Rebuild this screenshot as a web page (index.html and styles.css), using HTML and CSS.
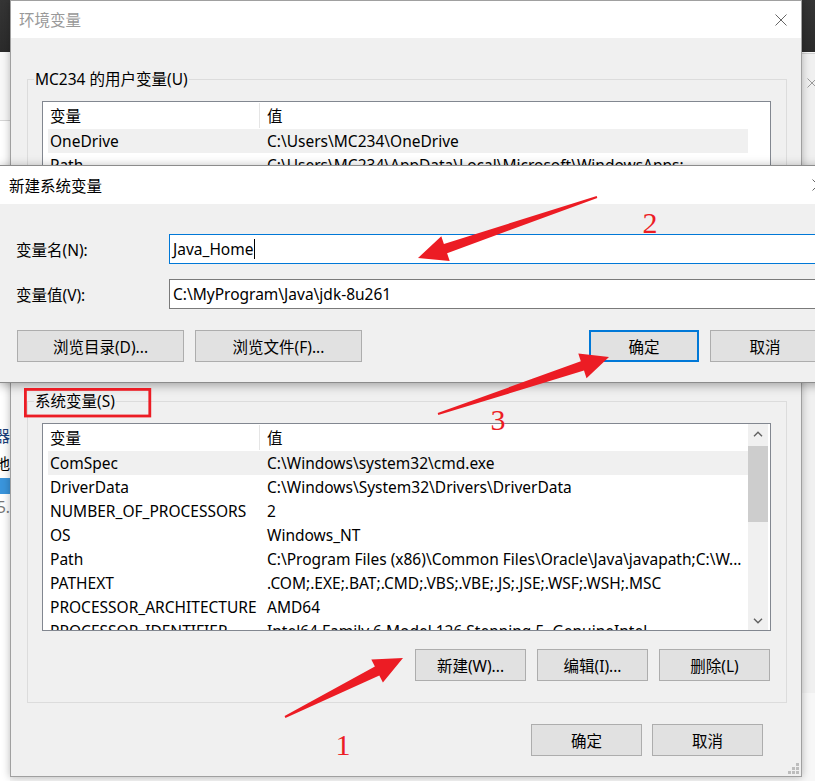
FILE: index.html
```html
<!DOCTYPE html>
<html lang="zh-CN">
<head>
<meta charset="utf-8">
<title>环境变量</title>
<link rel="stylesheet" href="styles.css">
</head>
<body>
<div class="desktop">

  <div class="bg-left">
    <div class="bl-head"></div>
    <div class="bl-line bl-a">服务器</div>
    <div class="bl-line bl-b">本地</div>
    <div class="bl-sel"></div>
    <div class="bl-line bl-c">5.</div>
  </div>

  <div class="bg-right">
    <svg class="bg-x" viewBox="0 0 10 10"><path d="M0.5 0.5L9.5 9.5M9.5 0.5L0.5 9.5"/></svg>
  </div>

  <div class="win main">
    <div class="titlebar inactive">
      <span>环境变量</span>
      <svg class="close" viewBox="0 0 12 12"><path d="M0.5 0.5L11.5 11.5M11.5 0.5L0.5 11.5"/></svg>
    </div>
    <div class="win-body">
      <fieldset class="group">
        <legend>MC234 的用户变量(U)</legend>
        <div class="listbox">
          <div class="lv">
            <div class="lv-head"><span class="c1">变量</span><span class="c2">值</span></div>
            <div class="lv-row sel"><span class="c1">OneDrive</span><span class="c2">C:\Users\MC234\OneDrive</span></div>
            <div class="lv-row"><span class="c1">Path</span><span class="c2">C:\Users\MC234\AppData\Local\Microsoft\WindowsApps;</span></div>
            <div class="lv-row"><span class="c1">TEMP</span><span class="c2">%USERPROFILE%\AppData\Local\Temp</span></div>
            <div class="lv-row"><span class="c1">TMP</span><span class="c2">%USERPROFILE%\AppData\Local\Temp</span></div>
          </div>
          <div class="vscroll empty"></div>
        </div>
        <div class="btnrow">
          <button class="btn">新建(N)...</button>
          <button class="btn">编辑(E)...</button>
          <button class="btn">删除(D)</button>
        </div>
      </fieldset>

      <fieldset class="group">
        <legend>系统变量(S)</legend>
        <div class="listbox">
          <div class="lv">
            <div class="lv-head"><span class="c1">变量</span><span class="c2">值</span></div>
            <div class="lv-row sel"><span class="c1">ComSpec</span><span class="c2">C:\Windows\system32\cmd.exe</span></div>
            <div class="lv-row"><span class="c1">DriverData</span><span class="c2">C:\Windows\System32\Drivers\DriverData</span></div>
            <div class="lv-row"><span class="c1">NUMBER_OF_PROCESSORS</span><span class="c2">2</span></div>
            <div class="lv-row"><span class="c1">OS</span><span class="c2">Windows_NT</span></div>
            <div class="lv-row"><span class="c1">Path</span><span class="c2">C:\Program Files (x86)\Common Files\Oracle\Java\javapath;C:\W...</span></div>
            <div class="lv-row"><span class="c1">PATHEXT</span><span class="c2">.COM;.EXE;.BAT;.CMD;.VBS;.VBE;.JS;.JSE;.WSF;.WSH;.MSC</span></div>
            <div class="lv-row"><span class="c1">PROCESSOR_ARCHITECTURE</span><span class="c2">AMD64</span></div>
            <div class="lv-row"><span class="c1">PROCESSOR_IDENTIFIER</span><span class="c2">Intel64 Family 6 Model 126 Stepping 5, GenuineIntel</span></div>
          </div>
          <div class="vscroll">
            <div class="sb-arrow"><svg class="chev" viewBox="0 0 10 6"><polyline points="1,5.2 5,1.2 9,5.2"/></svg></div>
            <div class="sb-thumb"></div>
            <div class="sb-space"></div>
            <div class="sb-arrow down"><svg class="chev" viewBox="0 0 10 6"><polyline points="1,0.8 5,4.8 9,0.8"/></svg></div>
          </div>
        </div>
        <div class="btnrow">
          <button class="btn">新建(W)...</button>
          <button class="btn">编辑(I)...</button>
          <button class="btn">删除(L)</button>
        </div>
      </fieldset>

      <div class="footer">
        <button class="btn">确定</button>
        <button class="btn">取消</button>
      </div>
    </div>
    <svg class="grip" viewBox="0 0 11 11">
      <rect x="8" y="0" width="3" height="3"/>
      <rect x="4" y="4" width="3" height="3"/>
      <rect x="8" y="4" width="3" height="3"/>
      <rect x="0" y="8" width="3" height="3"/>
      <rect x="4" y="8" width="3" height="3"/>
      <rect x="8" y="8" width="3" height="3"/>
    </svg>
  </div>

  <div class="win dialog">
    <div class="titlebar">
      <span>新建系统变量</span>
      <svg class="close" viewBox="0 0 12 12"><path d="M0.5 0.5L11.5 11.5M11.5 0.5L0.5 11.5"/></svg>
    </div>
    <div class="dlg-body">
      <div class="field">
        <label>变量名(N):</label>
        <div class="input focus">Java_Home<span class="caret"></span></div>
      </div>
      <div class="field">
        <label>变量值(V):</label>
        <div class="input">C:\MyProgram\Java\jdk-8u261</div>
      </div>
      <div class="dlg-buttons">
        <button class="btn wide">浏览目录(D)...</button>
        <button class="btn wide">浏览文件(F)...</button>
        <span class="spacer"></span>
        <button class="btn small default">确定</button>
        <button class="btn small">取消</button>
      </div>
    </div>
  </div>

  <svg class="annot" viewBox="0 0 815 781">
    <rect class="mark" x="25.4" y="389.4" width="124.4" height="26.6"/>
    <polygon class="arrow" points="596.7,196.1 443.9,243.9 441.3,236.3 418,258 449.7,260.9 447.1,253.3 597.3,197.9"/>
    <polygon class="arrow" points="437.7,413.1 580.8,361.2 578.3,353.6 609,357 586.5,378.2 584.0,370.6 438.3,415.0"/>
    <polygon class="arrow" points="284.6,716.1 374.9,666.5 371.3,659.4 403,658 382.9,682.6 379.3,675.5 285.4,717.9"/>
    <text class="num" x="650" y="233">2</text>
    <text class="num" x="498" y="430">3</text>
    <text class="num" x="343" y="755">1</text>
  </svg>
</div>
</body>
</html>
```

FILE: styles.css
```css
* { box-sizing: border-box; }
html, body { margin: 0; padding: 0; }
body {
  width: 815px;
  height: 781px;
  overflow: hidden;
  font-family: "Noto Sans", "Noto Sans CJK SC", sans-serif;
  font-size: 15.5px;
  color: #000;
}
.desktop {
  position: relative;
  width: 815px;
  height: 781px;
  overflow: hidden;
  background: linear-gradient(#353535 0, #2b2b2b 52px, #f7f7f7 52px);
}

/* background windows */
.bg-left {
  position: absolute;
  left: 0;
  top: 52px;
  width: 10px;
  bottom: 0;
  background: #fff;
  overflow: hidden;
}
.bl-head { height: 69px; background: #f8f8f8; border-bottom: 1px solid #d5d5d5; }
.bl-line {
  display: flex;
  justify-content: flex-end;
  white-space: nowrap;
  height: 20px;
  line-height: 20px;
}
.bl-a { margin-top: 305px; color: #1c3f7a; }
.bl-b { margin-top: 8px; }
.bl-sel { height: 16px; margin-top: 4px; background: #3a95dc; }
.bl-c { margin-top: 3px; color: #777; }

.bg-right {
  position: absolute;
  left: 802px;
  top: 53px;
  width: 20px;
  height: 640px;
  background: #f0f0f0;
  border-top: 1px solid #cfcfcf;
  padding: 24px 0 0 5px;
}
.bg-x { display: block; width: 10px; height: 10px; stroke: #9a9a9a; stroke-width: 1; }

/* windows */
.win {
  position: absolute;
  background: #f0f0f0;
  border: 1px solid #a0a0a0;
  box-shadow: 0 0 8px rgba(0, 0, 0, 0.28);
  display: flex;
  flex-direction: column;
}
.main { left: 10px; top: 0; width: 792px; height: 777px; }
.titlebar {
  flex: none;
  height: 37px;
  background: #fff;
  display: flex;
  align-items: center;
  justify-content: space-between;
  padding: 0 14px 0 8px;
}
.titlebar.inactive { color: #999; }
.close { width: 12px; height: 12px; stroke: #666; stroke-width: 1; fill: none; }

.win-body {
  flex: 1;
  display: flex;
  flex-direction: column;
  padding: 31px 14px 20px 16px;
}
fieldset.group {
  margin: 0;
  min-width: 0;
  height: 312px;
  border: 1px solid #dcdcdc;
  padding: 0 15px 21px 6px;
}
fieldset.group + fieldset.group { margin-top: 10px; }
legend {
  padding: 0 1px;
  height: 20px;
  line-height: 20px;
}

.listbox {
  margin: 12px 0 0 8px;
  width: 729px;
  height: 208px;
  border: 1px solid #828790;
  background: #fff;
  display: flex;
  padding-right: 2px;
  overflow: hidden;
}
.lv { flex: 1; min-width: 0; padding-left: 5px; overflow: hidden; }
.lv-head, .lv-row { display: flex; white-space: nowrap; }
.lv-head { height: 27px; align-items: center; }
.lv-head .c1 { border-right: 1px solid #e5e5e5; height: 25px; line-height: 27px; }
.lv-head .c2 { line-height: 27px; height: 25px; }
.lv-row { height: 24px; line-height: 24px; }
.lv-row.sel { background: #f0f0f0; }
.c1 { width: 212px; flex: none; padding-left: 2px; overflow: hidden; }
.c2 { flex: 1; min-width: 0; padding-left: 7px; overflow: hidden; }

.vscroll {
  flex: none;
  width: 20px;
  background: #f0f0f0;
  display: flex;
  flex-direction: column;
}
.vscroll.empty { background: #fff; }
.sb-arrow { height: 20px; display: flex; align-items: center; justify-content: center; }
.sb-arrow.down { height: 18px; }
.chev { width: 10px; height: 6px; fill: none; stroke: #606060; stroke-width: 1.4; }
.sb-thumb { height: 76px; margin-top: 2px; background: #cdcdcd; }
.sb-space { flex: 1; }

.btn {
  font-family: inherit;
  font-size: 15.5px;
  color: #000;
  height: 32px;
  width: 111px;
  padding: 0;
  margin: 0;
  border: 1px solid #adadad;
  background: #e1e1e1;
  display: flex;
  align-items: center;
  justify-content: center;
}
.btnrow {
  display: flex;
  justify-content: flex-end;
  gap: 11px;
  margin: 18px 1px 0 0;
}
.footer {
  display: flex;
  justify-content: flex-end;
  gap: 10px;
  margin-top: 21px;
  padding-right: 24px;
}
.grip { position: absolute; right: 2px; bottom: 2px; width: 11px; height: 11px; fill: #bdbdbd; }

/* dialog */
.dialog {
  left: -1px;
  top: 165px;
  width: 840px;
  height: 218px;
  border-color: #8c8c8c;
  box-shadow: 0 2px 10px rgba(0, 0, 0, 0.35);
}
.dialog .titlebar { height: 38px; padding: 0 14px 0 9px; }
.dlg-body { padding: 30px 18px 20px 16px; display: flex; flex-direction: column; }
.field { display: flex; align-items: center; height: 30px; }
.field + .field { margin-top: 15px; }
.field label { width: 153px; flex: none; }
.input {
  flex: 1;
  height: 30px;
  border: 1px solid #7a7a7a;
  background: #fff;
  padding-left: 3px;
  line-height: 28px;
  white-space: nowrap;
  display: flex;
  align-items: center;
}
.input.focus { border-color: #0078d7; }
.caret { width: 1px; height: 20px; background: #000; margin-left: 1px; }
.dlg-buttons { display: flex; gap: 11px; margin-top: 21px; padding-left: 1px; }
.btn.wide { width: 167px; }
.btn.small { width: 110px; }
.btn.default { border: 2px solid #0078d7; }
.spacer { flex: 1; }

/* annotations */
.annot { position: absolute; left: 0; top: 0; width: 815px; height: 781px; pointer-events: none; }
.mark { fill: none; stroke: #ec1c24; stroke-width: 2.8; }
.arrow { fill: #ec1c24; }
.num { fill: #ec1c24; font-family: "Liberation Serif", serif; font-size: 30px; text-anchor: middle; }
```
